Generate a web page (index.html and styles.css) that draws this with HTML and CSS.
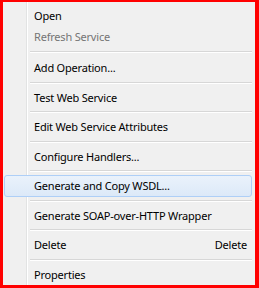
FILE: index.html
```html
<!DOCTYPE html>
<html>
<head>
<meta charset="utf-8">
<link rel="stylesheet" href="styles.css">
</head>
<body>
<div class="frame">
  <ul class="menu">
    <li class="item compact">Open</li>
    <li class="item compact disabled">Refresh Service</li>
    <li class="sep first"></li>
    <li class="item">Add Operation...</li>
    <li class="sep"></li>
    <li class="item">Test Web Service</li>
    <li class="sep"></li>
    <li class="item">Edit Web Service Attributes</li>
    <li class="sep"></li>
    <li class="item">Configure Handlers...</li>
    <li class="sep"></li>
    <li class="item active">Generate and Copy WSDL...</li>
    <li class="sep"></li>
    <li class="item">Generate SOAP-over-HTTP Wrapper</li>
    <li class="sep"></li>
    <li class="item"><span class="label">Delete</span><span class="key">Delete</span></li>
    <li class="sep"></li>
    <li class="item">Properties</li>
  </ul>
</div>
</body>
</html>
```
FILE: styles.css
```css
html, body {
  margin: 0;
  padding: 0;
  background: #ffffff;
}

.frame {
  width: 259px;
  height: 288px;
  box-sizing: border-box;
  border-style: solid;
  border-color: #ff0000;
  border-width: 2px 4px 3px 3px;
  background:
    linear-gradient(to right, transparent 23px, #e2e3e3 23px, #e2e3e3 24px, #ffffff 24px, #ffffff 25px, transparent 25px),
    #f0f0f0;
  overflow: hidden;
}

.menu {
  list-style: none;
  margin: 0;
  padding: 3px 3px 0 1px;
  font-family: "Noto Sans", "Open Sans", sans-serif;
  font-size: 11px;
  letter-spacing: -0.2px;
  color: #000000;
}

.item {
  display: flex;
  align-items: center;
  justify-content: space-between;
  height: 22px;
  padding: 0 4px 0 29px;
  box-sizing: border-box;
  border: 1px solid transparent;
  border-radius: 3px;
  white-space: nowrap;
}

.item.compact {
  height: 21px;
}

.item.disabled {
  color: #757575;
}

.item.active {
  background: linear-gradient(to bottom, #eaf2fb, #dce9f8);
  border-color: #aecff7;
}

.sep {
  height: 7.5px;
  margin-left: 26px;
  position: relative;
}

.sep.first {
  height: 9.5px;
}

.sep::before {
  content: "";
  display: block;
  position: absolute;
  left: 0;
  right: 0;
  top: 3px;
  height: 1px;
  background: #d7d7d7;
  box-shadow: 0 1px 0 #ffffff;
}

.sep.first::before {
  top: 4px;
}
```
